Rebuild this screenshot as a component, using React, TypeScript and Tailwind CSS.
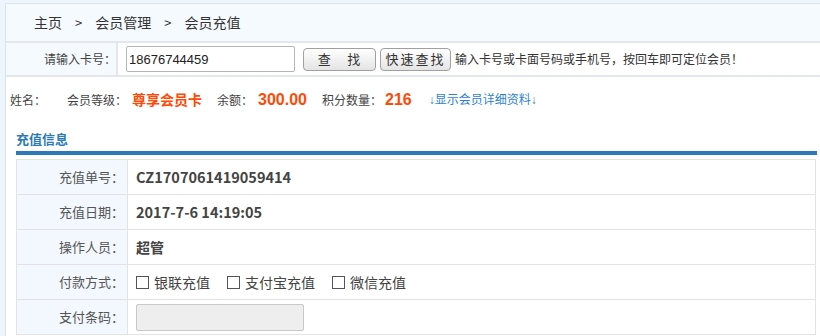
import React from 'react';

const font = { fontFamily: '"Noto Sans CJK SC", "Liberation Sans", sans-serif' };
const latin = { fontFamily: '"Liberation Sans", sans-serif' };

function Row({ label, children }: { label: string; children: React.ReactNode }) {
  return (
    <div className="flex h-[35px] border-b border-[#e3e3e3]">
      <div className="w-[111px] shrink-0 bg-[#f2f8fe] border-r border-[#e3e3e3] flex items-center justify-end pr-[3px] text-[13px] text-[#555]">
        {label}
      </div>
      <div className="flex-1 flex items-center pl-[8px]">{children}</div>
    </div>
  );
}

function Check({ label }: { label: string }) {
  return (
    <label className="flex items-center mr-[17px] text-[14px] text-[#444]">
      <span className="w-[13px] h-[13px] border border-[#555] bg-white mr-[5px]" />
      {label}
    </label>
  );
}

export default function App() {
  return (
    <div className="w-[820px] h-[336px] overflow-hidden bg-[#eef6fd] pl-[5px] pt-[3px]" style={font}>
      <div className="h-full bg-white border-l border-t border-[#dde3ea]">
        <div className="h-[37px] bg-[#f5fafe] flex items-center pl-[28px] text-[14px] text-[#333]">
          <span>主页</span>
          <span className="mx-[13px] text-[13px]">&gt;</span>
          <span>会员管理</span>
          <span className="mx-[13px] text-[13px]">&gt;</span>
          <span>会员充值</span>
        </div>
        <div className="flex h-[36px] border-t-2 border-b-2 border-[#e3e7ec]">
          <div className="w-[112px] shrink-0 bg-[#f5fafe] border-r-2 border-[#e3e7ec] flex items-center justify-end text-[12px] text-[#444]">
            请输入卡号：
          </div>
          <div className="flex items-center pl-[8px]">
            <input
              defaultValue="18676744459"
              className="w-[169px] h-[26px] border border-[#b5b5b5] rounded-[2px] px-[2px] text-[13px] text-[#222] outline-none"
              style={latin}
            />
            <button className="ml-[8px] w-[73px] h-[23px] border border-[#a0a0a0] rounded-[4px] bg-gradient-to-b from-[#ffffff] to-[#e4e4e4] text-[13px] text-[#333] tracking-[1px]">
              查&nbsp;&nbsp;&nbsp;&nbsp;找
            </button>
            <button className="ml-[4px] w-[71px] h-[23px] border border-[#a0a0a0] rounded-[4px] bg-gradient-to-b from-[#ffffff] to-[#e4e4e4] text-[13px] text-[#333] tracking-[2px]">
              快速查找
            </button>
            <span className="ml-[4px] text-[12px] text-[#333]">输入卡号或卡面号码或手机号，按回车即可定位会员！</span>
          </div>
        </div>
        <div className="h-[43px] flex items-center pl-[4px] pt-[2px] text-[12px] text-[#444]">
          <span>姓名：</span>
          <span className="ml-[21px]">会员等级：</span>
          <span className="ml-[5px] text-[14px] font-bold text-[#ff4a06]">尊享会员卡</span>
          <span className="ml-[15px]">余额：</span>
          <span className="ml-[5px] text-[16px] font-bold text-[#ff4a06]" style={latin}>300.00</span>
          <span className="ml-[15px]">积分数量：</span>
          <span className="ml-[3px] text-[16px] font-bold text-[#ff4a06]" style={latin}>216</span>
          <span className="ml-[17px] text-[#2f7fd0]">
            <span style={latin}>↓</span>显示会员详细资料<span style={latin}>↓</span>
          </span>
        </div>
        <div className="pl-[10px] pr-[3px]">
          <div className="h-[31px] flex items-end pb-[3px] text-[13px] font-bold text-[#2a7ab8]">充值信息</div>
          <div className="h-[4px] bg-[#2a7ab8]" />
          <div className="mt-[4px] mr-[1px] border-t border-l border-r border-[#e3e3e3]">
            <Row label="充值单号：">
              <span className="text-[14.5px] font-bold text-[#444]">CZ1707061419059414</span>
            </Row>
            <Row label="充值日期：">
              <span className="text-[14.5px] font-bold text-[#444]">2017-7-6 14:19:05</span>
            </Row>
            <Row label="操作人员：">
              <span className="text-[14px] font-bold text-[#444]">超管</span>
            </Row>
            <Row label="付款方式：">
              <Check label="银联充值" />
              <Check label="支付宝充值" />
              <Check label="微信充值" />
            </Row>
            <Row label="支付条码：">
              <div className="w-[168px] h-[27px] border border-[#c8c8c8] rounded-[2px] bg-[#eeeeee]" />
            </Row>
          </div>
        </div>
      </div>
    </div>
  );
}
